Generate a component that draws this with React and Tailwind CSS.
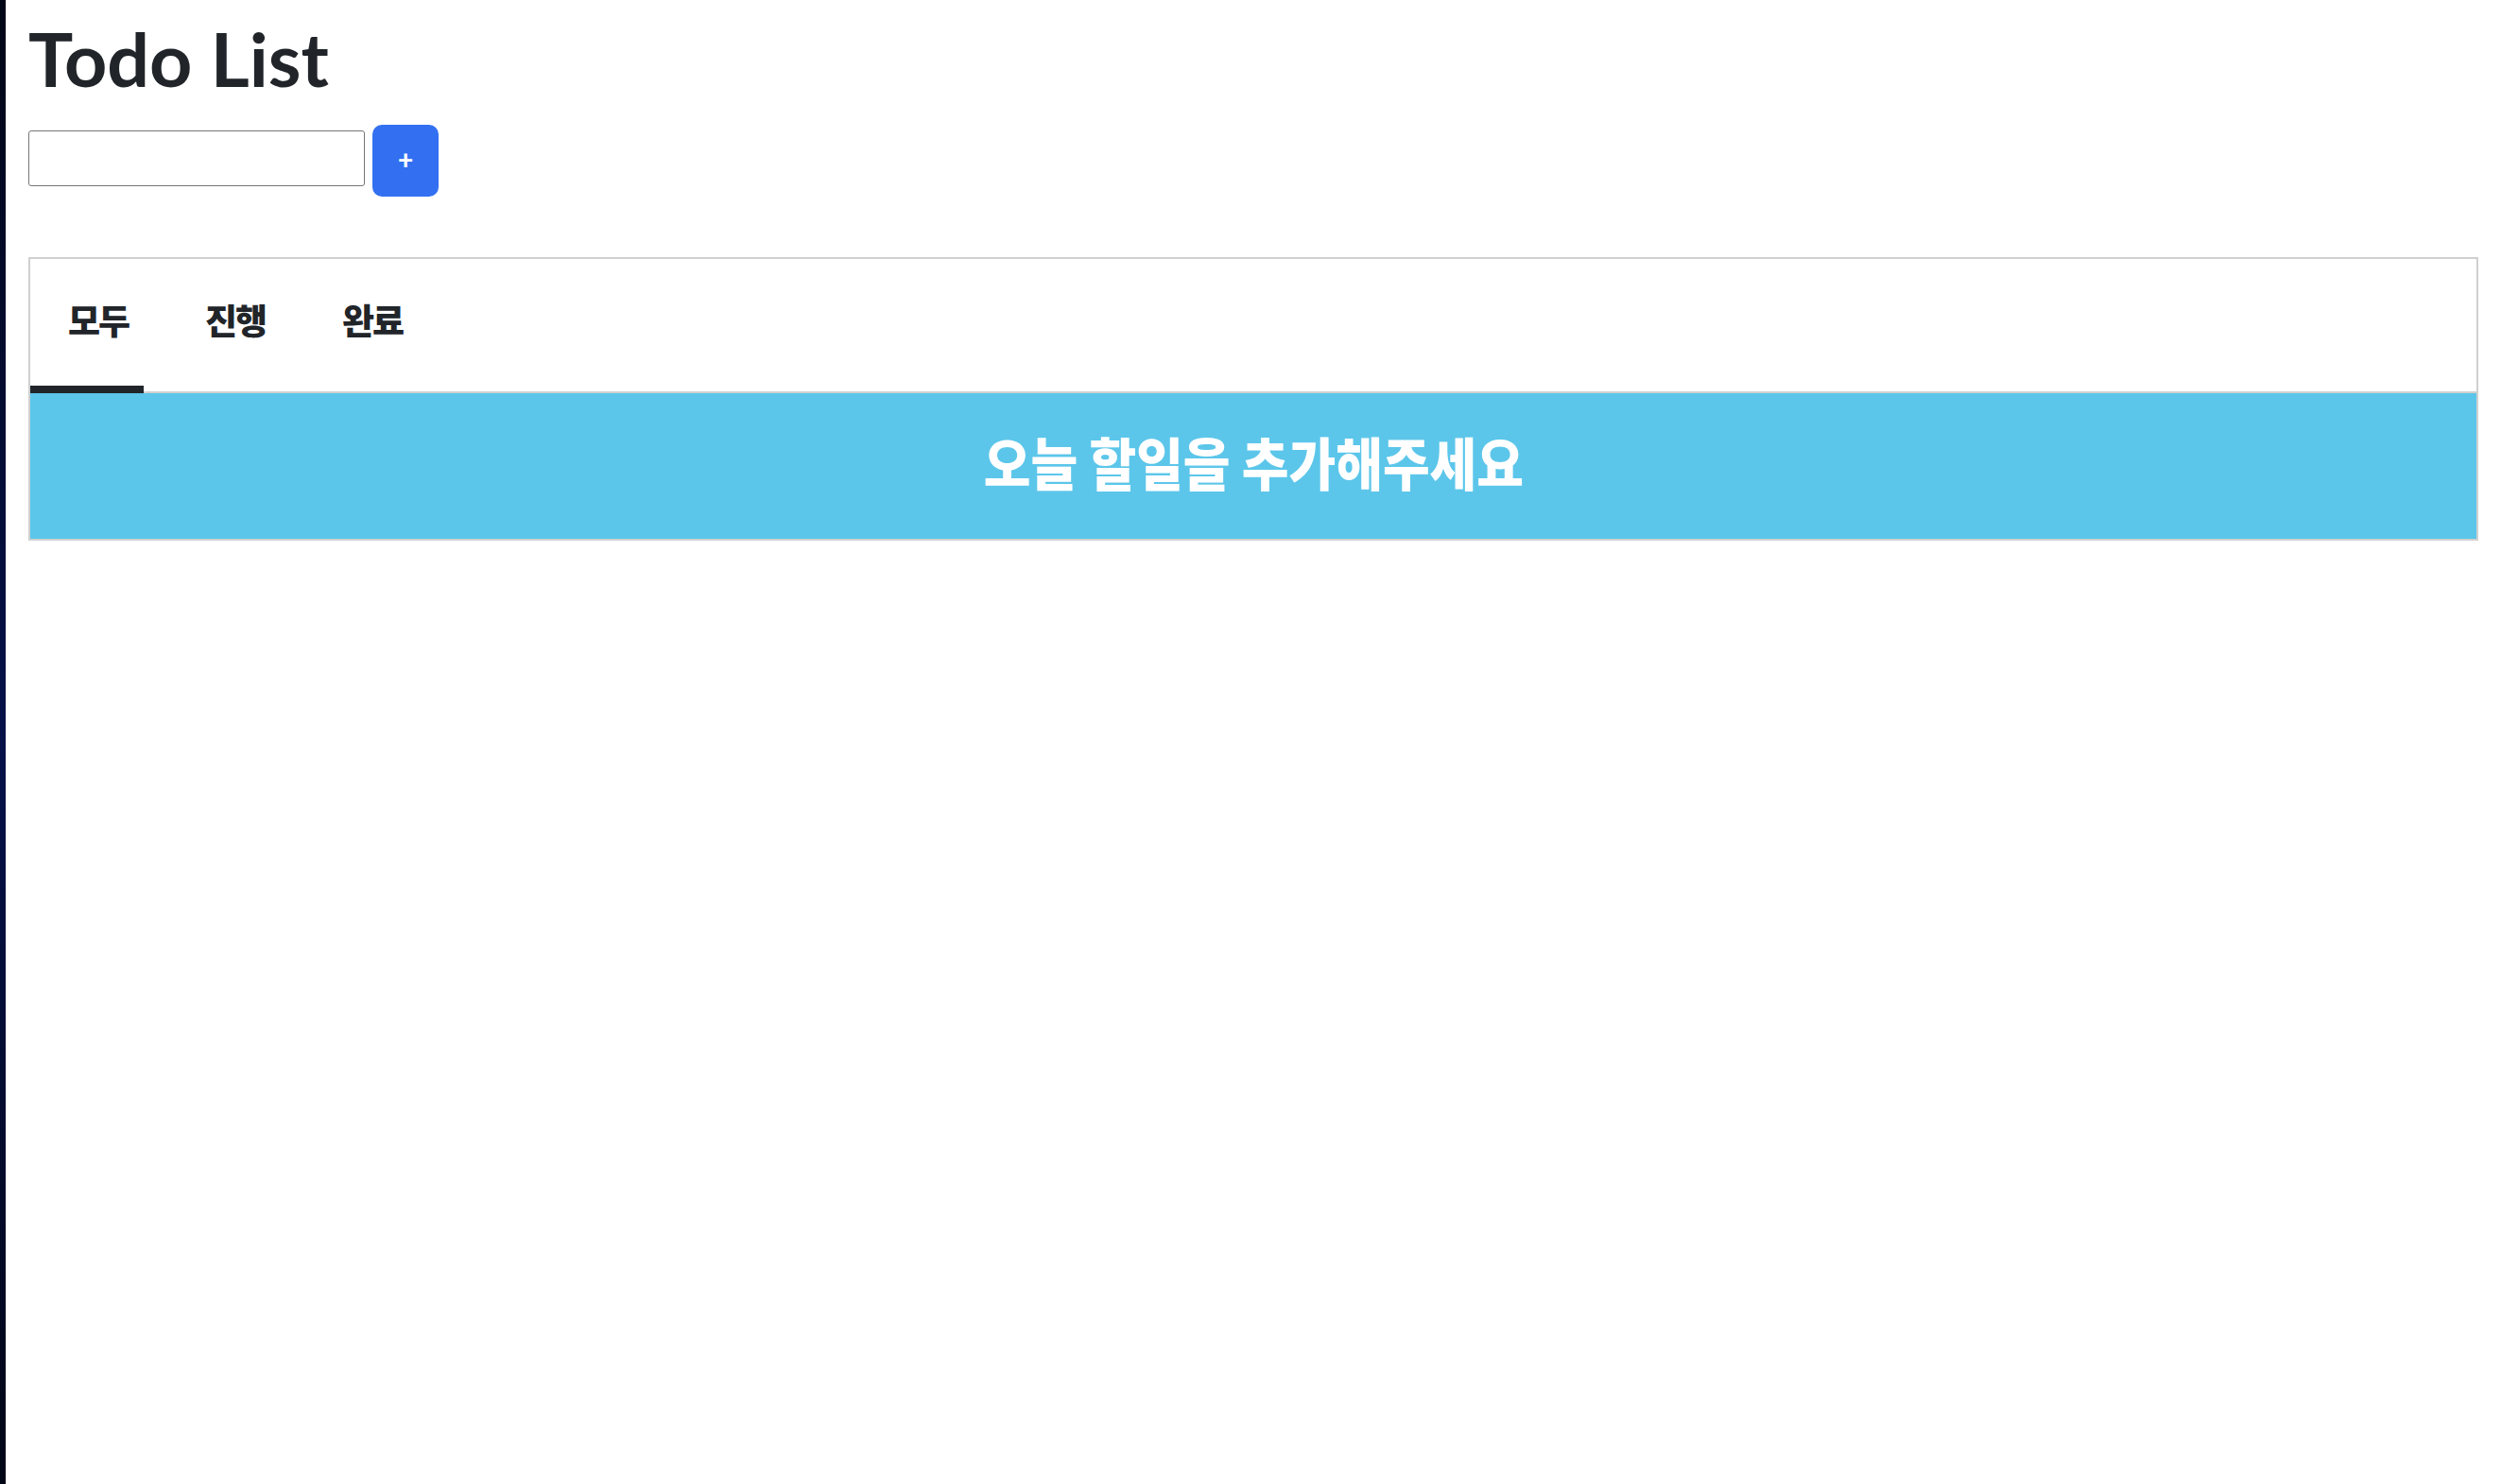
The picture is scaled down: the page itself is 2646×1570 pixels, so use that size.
export default function App() {
  const tabs = ["모두", "진행", "완료"];
  const active = 0;
  return (
    <div className="flex min-h-[1570px] w-full bg-white font-['Lato','Noto_Sans_CJK_KR',sans-serif] text-[#212529]">
      <div className="w-[6px] shrink-0 bg-gradient-to-b from-[#020616] via-[#06114a] to-[#020616]" />
      <div className="flex-1 px-6">
        <h1 className="pt-[14px] text-[79px] font-bold leading-[95px]">Todo List</h1>

        <div className="mt-[23px] flex items-center gap-2">
          <input
            type="text"
            className="mb-[5px] h-[59px] w-[356px] rounded-[3px] border-[1.5px] border-[#767676] bg-white px-2 text-2xl outline-none"
          />
          <button className="flex h-[76px] w-[70px] items-center justify-center rounded-[10px] bg-[#3370f1] pb-[4px] text-[28px] font-black text-white">
            +
          </button>
        </div>

        <div className="mt-[64px] border-2 border-[#d0d0d0]">
          <div className="flex h-[142px] border-b-2 border-[#d0d0d0] font-['Noto_Sans_CJK_KR',sans-serif]">
            {tabs.map((t, i) => (
              <div key={t} className="relative flex w-[145px] items-center pb-[10px] pl-[40px]">
                <span className="text-[37px] font-black tracking-[-2px]">{t}</span>
                {i === active && (
                  <div className="absolute -bottom-[2px] left-0 h-2 w-[120px] bg-[#212529]" />
                )}
              </div>
            ))}
          </div>
          <div className="flex h-[154px] items-center justify-center bg-[#5cc6ea] pb-[10px]">
            <span className="inline-block scale-x-[0.9] font-['Noto_Sans_CJK_KR',sans-serif] text-[60px] font-black text-white">
              오늘 할일을 추가해주세요
            </span>
          </div>
        </div>
      </div>
    </div>
  );
}
